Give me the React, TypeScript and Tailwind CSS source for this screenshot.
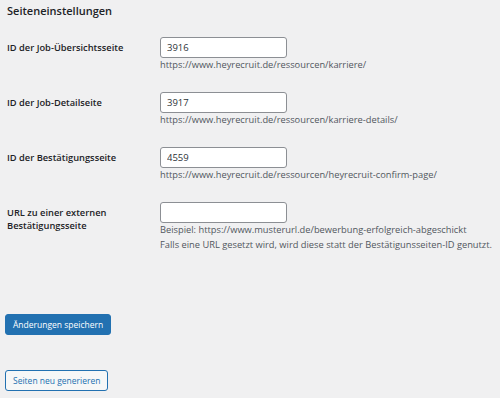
const rows = [
  {
    label: ["ID der Job-Übersichtsseite"],
    value: "3916",
    notes: ["https://www.heyrecruit.de/ressourcen/karriere/"],
  },
  {
    label: ["ID der Job-Detailseite"],
    value: "3917",
    notes: ["https://www.heyrecruit.de/ressourcen/karriere-details/"],
  },
  {
    label: ["ID der Bestätigungsseite"],
    value: "4559",
    notes: ["https://www.heyrecruit.de/ressourcen/heyrecruit-confirm-page/"],
  },
  {
    label: ["URL zu einer externen", "Bestätigungsseite"],
    value: "",
    notes: [
      "Beispiel: https://www.musterurl.de/bewerbung-erfolgreich-abgeschickt",
      "Falls eine URL gesetzt wird, wird diese statt der Bestätigunsseiten-ID genutzt.",
    ],
  },
];

export default function App() {
  return (
    <div
      className="min-h-screen w-[500px] h-[398px] overflow-hidden bg-[#f0f0f1] pl-[7px] pt-[3px] text-[#1d2327]"
      style={{ fontFamily: '"Open Sans", "Noto Sans", sans-serif' }}
    >
      {/* Section title */}
      <h2 className="text-[11px] font-semibold leading-[16px]">Seiteneinstellungen</h2>

      <div className="mt-[18px] flex flex-col gap-[21px]">
        {rows.map((row, i) => (
          <div key={i} className="flex">
            <div className="w-[153px] shrink-0 pt-[4px] text-[9.3px] font-semibold leading-[13px]">
              {row.label.map((l, j) => (
                <div key={j}>{l}</div>
              ))}
            </div>
            <div className="flex flex-col">
              <input
                defaultValue={row.value}
                className="h-[21px] w-[127px] rounded-[3px] border border-[#8c8f94] bg-white px-[6px] text-[9.5px] text-[#2c3338] outline-none"
              />
              {row.notes.map((n, j) => (
                <p
                  key={j}
                  className={`whitespace-nowrap text-[9.3px] leading-[12px] text-[#50575e] ${
                    j === 0 ? "mt-[1px]" : "mt-[3px]"
                  }`}
                >
                  {n}
                </p>
              ))}
            </div>
          </div>
        ))}
      </div>

      <button className="mt-[63px] block h-[21px] rounded-[3px] border border-[#2271b1] bg-[#2271b1] px-[7px] text-[8.5px] leading-[19px] text-white -ml-[2px]">
        Änderungen speichern
      </button>

      <button className="mt-[35px] block h-[21px] rounded-[3px] border border-[#2271b1] bg-[#f6f7f7] px-[7px] text-[8.5px] leading-[19px] text-[#2271b1] -ml-[2px]">
        Seiten neu generieren
      </button>
    </div>
  );
}
